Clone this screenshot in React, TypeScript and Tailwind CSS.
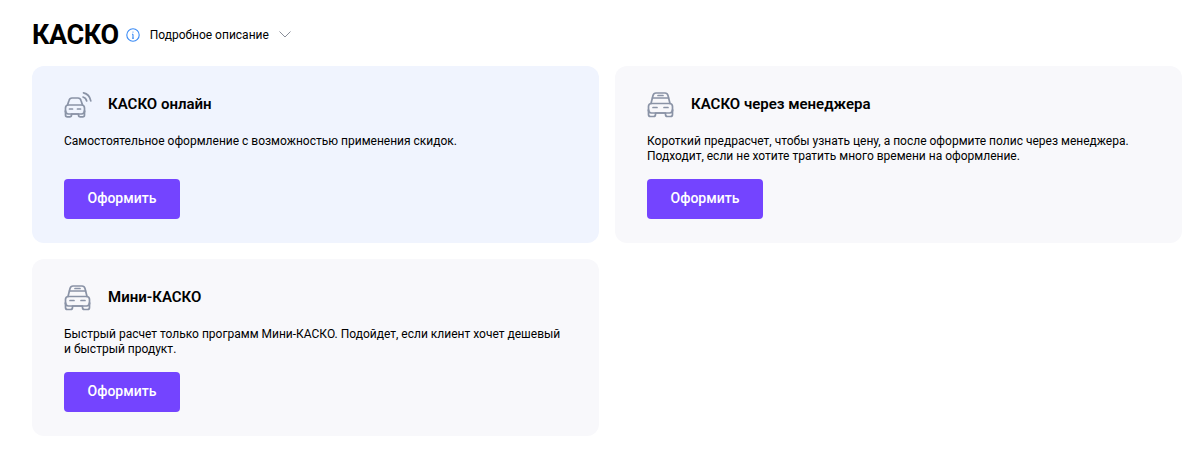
import React from 'react';

const CarSignalIcon = () => (
    <svg width="32" height="32" viewBox="0 0 32 32" fill="none" stroke="#8a93a6" strokeWidth="1.7" strokeLinecap="round" strokeLinejoin="round">
        <path d="M3.5 17 L5 12.5 C5.4 11 6.5 10 8 10 H14 C15.5 10 16.6 11 17 12.5 L18.5 17" />
        <path d="M1.5 23 V20 C1.5 18.3 2.8 17 4.5 17 H17.5 C19.2 17 20.5 18.3 20.5 20 V23" />
        <path d="M1.5 23 V27 C1.5 28 2.3 28.8 3.3 28.8 H5.7 C6.7 28.8 7.5 28 7.5 27 V26 H14.5 V27 C14.5 28 15.3 28.8 16.3 28.8 H18.7 C19.7 28.8 20.5 28 20.5 27 V23" />
        <path d="M1.5 23 C1.5 24.8 2.7 26 4.5 26 H17.5 C19.3 26 20.5 24.8 20.5 23" />
        <path d="M5.5 21 H8.5 M13.5 21 H16.5" />
        <path d="M19 9 C20.9 9.5 22.2 10.9 22.7 13" />
        <path d="M19.5 4.8 C23.3 5.6 26 8.7 26.8 12.8" />
    </svg>
);

const CarTaxiIcon = () => (
    <svg width="32" height="32" viewBox="0 0 32 32" fill="none" stroke="#8a93a6" strokeWidth="1.7" strokeLinecap="round" strokeLinejoin="round">
        <path d="M4 15.5 L6 7.5 C6.4 6 7.5 5 9 5 H18 C19.5 5 20.6 6 21 7.5 L23 15.5" />
        <path d="M5.5 10 H21.5 M11 7.5 H16" />
        <path d="M1.5 22 V18.5 C1.5 16.8 2.8 15.5 4.5 15.5 H22.5 C24.2 15.5 25.5 16.8 25.5 18.5 V22" />
        <path d="M1.5 22 V26.5 C1.5 27.6 2.4 28.5 3.5 28.5 H6.5 C7.6 28.5 8.5 27.6 8.5 26.5 V25 H18.5 V26.5 C18.5 27.6 19.4 28.5 20.5 28.5 H23.5 C24.6 28.5 25.5 27.6 25.5 26.5 V22" />
        <path d="M1.5 22 C1.5 23.8 2.7 25 4.5 25 H22.5 C24.3 25 25.5 23.8 25.5 22" />
        <path d="M6 19.5 H10 M17 19.5 H21" />
    </svg>
);

type Product = {
    title: string;
    lines: string[];
    icon: React.ReactNode;
    bg: string;
};

const products: Product[] = [
    {
        title: 'КАСКО онлайн',
        lines: ['Самостоятельное оформление с возможностью применения скидок.'],
        icon: <CarSignalIcon />,
        bg: 'bg-[#f0f4fe]',
    },
    {
        title: 'КАСКО через менеджера',
        lines: [
            'Короткий предрасчет, чтобы узнать цену, а после оформите полис через менеджера.',
            'Подходит, если не хотите тратить много времени на оформление.',
        ],
        icon: <CarTaxiIcon />,
        bg: 'bg-[#f8f8fb]',
    },
    {
        title: 'Мини-КАСКО',
        lines: [
            'Быстрый расчет только программ Мини-КАСКО. Подойдет, если клиент хочет дешевый',
            'и быстрый продукт.',
        ],
        icon: <CarTaxiIcon />,
        bg: 'bg-[#f8f8fb]',
    },
];

export default function App() {
    return (
        <div className="min-h-screen bg-white pt-[16px] pl-[32px] pr-[3px] font-['Roboto',sans-serif] text-black">
            {/* Header */}
            <div className="flex h-[34px] items-center pt-[3px]">
                <h1 className="text-[27px] font-bold leading-[34px] tracking-[-0.4px]">КАСКО</h1>
                <svg className="ml-[7px]" width="14" height="14" viewBox="0 0 14 14" fill="none" stroke="#3b8bf5" strokeWidth="1.1">
                    <circle cx="7" cy="7" r="6.2" />
                    <path d="M7 6.2 V10.2 M6 10.2 H8 M6 6.2 H7" />
                    <circle cx="7" cy="4" r="0.6" fill="#3b8bf5" stroke="none" />
                </svg>
                <span className="ml-[10px] text-[12px] leading-[34px]">Подробное описание</span>
                <svg className="ml-[10px]" width="12" height="7" viewBox="0 0 12 7" fill="none" stroke="#8a8f9a" strokeWidth="1">
                    <path d="M0.5 0.5 L6 6 L11.5 0.5" />
                </svg>
            </div>

            {/* Cards */}
            <div className="mt-[16px] grid grid-cols-2 gap-[16px]">
                {products.map((product) => (
                    <div key={product.title} className={`h-[177px] rounded-[12px] px-[32px] pt-[22px] ${product.bg}`}>
                        <div className="flex h-[32px] items-center gap-[12px]">
                            {product.icon}
                            <h2 className="text-[15px] font-semibold leading-[32px]">{product.title}</h2>
                        </div>
                        <div className="mt-[14px] h-[45px] text-[12px] leading-[15px]">
                            {product.lines.map((line) => (
                                <p key={line}>{line}</p>
                            ))}
                        </div>
                        <button className="block h-[40px] w-[116px] rounded-[4px] bg-[#7444ff] pb-[2px] text-[14px] font-medium text-white">
                            Оформить
                        </button>
                    </div>
                ))}
            </div>
        </div>
    );
}
